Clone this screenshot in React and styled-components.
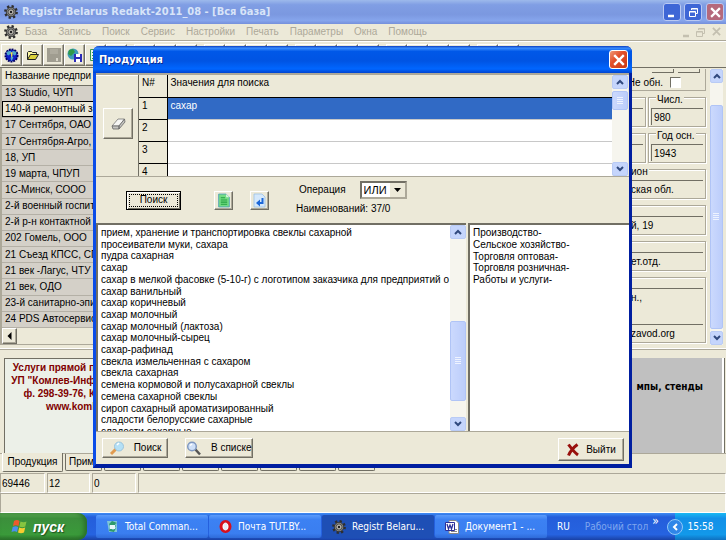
import React from 'react';
import styled, { createGlobalStyle, css } from 'styled-components';

const face = '#ece9d8';
const shadow = '#aca899';
const dark = '#716f64';
const uiFont = '"Liberation Sans", Arial, sans-serif';
const captionFont = '"DejaVu Sans Condensed", Tahoma, sans-serif';

const GlobalStyle = createGlobalStyle`
  * {
    box-sizing: border-box;
  }
  body {
    margin: 0;
    background: ${face};
    color: #000;
    font: 10px/12px ${uiFont};
  }
  button, input, select {
    font: inherit;
    color: inherit;
    margin: 0;
    padding: 0;
    border-radius: 0;
  }
`
const raised = css`
  background: ${face};
  border: 1px solid;
  border-color: #fff ${dark} ${dark} #fff;
  box-shadow: inset -1px -1px 0 ${shadow};
`
const sunken = css`
  border: 1px solid;
  border-color: ${shadow} #fff #fff ${shadow};
`
const Page = styled.div`
  position: relative;
  min-height: 100vh;
  display: flex;
  flex-direction: column;
  overflow: hidden;
`
const TitleBar = styled.header`
  display: flex;
  align-items: center;
  gap: 4px;
  height: 24px;
  padding: 0 2px 0 4px;
  background: linear-gradient(#9db9eb, #809ee4 20%, #7b98e0 60%, #86a5ec 85%, #7590dc);
  color: #d8e4f8;

  h1 {
    flex: 1;
    margin: 0;
    font: bold 11px/16px ${captionFont};
  }
`
const CaptionButton = styled.button`
  width: 18px;
  height: 18px;
  display: flex;
  align-items: center;
  justify-content: center;
  border: 1px solid #b9c9f3;
  border-radius: 3px;
  background: ${props => props.$close ? '#b5697c' : '#3e66d6'};
  margin-left: ${props => props.$close ? '0' : '-1px'};
`
const MenuBar = styled.nav`
  display: flex;
  align-items: center;
  gap: 11px;
  height: 17px;
  padding: 0 5px 0 4px;
  border-bottom: 1px solid ${shadow};
  color: ${shadow};

  svg:first-child {
    margin-right: -4px;
  }
`
const MenuItem = styled.button`
  border: 0;
  background: none;
`
const MdiButtons = styled.div`
  margin-left: auto;
  display: flex;
  gap: 6px;
`
const Toolbar = styled.div`
  display: flex;
  gap: 7px;
  height: 26px;
  padding: 2px 1px;
  border-top: 1px solid #fff;
`
const ToolGroup = styled.div`
  display: flex;
`
const ToolButton = styled.button`
  ${raised}
  width: 21px;
  height: 22px;
  display: flex;
  align-items: center;
  justify-content: center;
`
const Main = styled.main`
  flex: 1;
  display: flex;
  justify-content: space-between;
  border-top: 1px solid ${dark};
  border-bottom: 1px solid #fff;
  padding-bottom: 3px;
`
const Firms = styled.section`
  flex: 1;
  display: flex;
  flex-direction: column;
  border-left: 2px solid ${shadow};
`
const FirmTable = styled.table`
  flex: 1;
  width: 100%;
  height: 260px;
  border-collapse: collapse;
  background: #d4d0c8;

  th, td {
    padding: 0 3px;
    text-align: left;
    font-weight: normal;
    white-space: nowrap;
    border-bottom: 1px solid #b4b0a6;
  }
  th {
    height: 17px;
    background: ${face};
    border-bottom-color: ${dark};
  }
`
const FirmRow = styled.tr`
  ${props => props.$current && css`
    background: ${face};
    outline: 1px solid #000;
    outline-offset: -1px;
  `}
`
const HScroll = styled.div`
  display: flex;
  height: 17px;
  background: ${face};
  border-bottom: 1px solid ${shadow};
`
const HScrollButton = styled.button`
  ${raised}
  width: 15px;
  display: flex;
  align-items: center;
  justify-content: center;
`
const Card = styled.aside`
  width: 116px;
  display: flex;
  padding: 1px 3px 0 0;
`
const CardFields = styled.div`
  flex: 1;
  display: grid;
  grid-template-columns: 1fr 58px;
  grid-template-rows: 22px 30px 30px 30px 30px 30px 66px;
  gap: 6px 2px;
  margin-right: 4px;
`
const CardTop = styled.div`
  grid-column: 1 / -1;
  display: flex;
  flex-wrap: wrap;
  justify-content: flex-end;
  border: solid ${shadow};
  border-width: 0 1px 1px 0;
  padding: 0 5px;
`
const ClippedButton = styled.button`
  width: 22px;
  height: 4px;
  margin-left: 4px;
  border: solid ${dark};
  border-width: 0 1px 1px 0;
  background: ${face};
`
const CheckLabel = styled.label`
  flex-basis: 100%;
  display: flex;
  justify-content: flex-end;
  align-items: center;
  gap: 7px;
  padding-right: 19px;
`
const CheckBox = styled.input`
  appearance: none;
  width: 11px;
  height: 11px;
  background: #fff;
  border: 1px solid;
  border-color: ${dark} #fff #fff ${dark};
`
const Group = styled.label`
  position: relative;
  grid-column: ${props => props.$wide ? '1 / -1' : 'auto'};
  border: 1px solid ${shadow};
  box-shadow: inset 1px 1px 0 #fff, 1px 1px 0 #fff;
  padding: 10px 2px 1px 2px;
`
const Legend = styled.span`
  position: absolute;
  top: -4px;
  left: ${props => props.$tucked ? '19px' : '7px'};
  padding: 0 1px;
  line-height: 12px;
  background: ${face};
`
const Field = styled.input`
  display: block;
  width: 100%;
  height: 17px;
  padding-left: ${props => props.$tucked ? '17px' : '2px'};
  background: ${face};
  border: solid ${dark};
  border-width: 1px 0 0 1px;

  & + & {
    margin-top: 19px;
  }
`
const ScrollTrack = styled.div`
  display: flex;
  flex-direction: column;
  width: ${props => props.$width || 16}px;
  background: #f6f5ee;
`
const ScrollButton = styled.button`
  flex: none;
  height: 14px;
  display: flex;
  align-items: center;
  justify-content: center;
  border: 1px solid #b9cbf5;
  border-radius: 2px;
  background: #c5d5fc;
`
const ScrollThumb = styled.div`
  flex: ${props => props.$size};
  display: flex;
  align-items: center;
  justify-content: center;
  border: 1px solid #b0c4f6;
  border-radius: 2px;
  background: linear-gradient(90deg, #cbd9fd, #bccdfb);
`
const ScrollGap = styled.div`
  flex: ${props => props.$size};
`
const Banners = styled.section`
  display: flex;
  justify-content: space-between;
  height: 104px;
  padding: 8px 2px 0 4px;
  border-top: 1px solid ${shadow};
  font-weight: bold;
`
const MailBanner = styled.p`
  margin: 0;
  width: 92px;
  padding: 2px 1px;
  border: solid ${dark};
  border-width: 1px 0 0 1px;
  background: #ecf0e8;
  color: #800000;
  line-height: 13px;
  text-align: right;
  white-space: pre;
`
const StampBanner = styled.p`
  margin: 0;
  width: 110px;
  padding: 23px 19px;
  background: #c0c0c0;
  border-right: 2px solid #fff;
  box-shadow: 1px 0 0 ${dark};
  font-family: ${captionFont};
  text-align: right;
  white-space: nowrap;
`
const Tabs = styled.div`
  display: flex;
  align-items: flex-start;
  gap: 2px;
  height: 20px;
  padding-left: 2px;
  border-top: 1px solid ${shadow};
`
const Tab = styled.button`
  width: ${props => props.$active ? '61px' : '37px'};
  height: ${props => props.$active ? '19px' : '17px'};
  margin-top: ${props => props.$active ? '-1px' : '0'};
  border: solid;
  border-width: 0 1px 1px 1px;
  border-color: #fff ${dark} ${dark} ${props => props.$active ? '#fff' : dark};
  border-radius: 0 0 2px 2px;
  background: ${face};
  text-align: ${props => props.$active ? 'center' : 'left'};
  padding-left: ${props => props.$active ? '0' : '3px'};
`
const StatusBar = styled.footer`
  display: grid;
  grid-template-columns: 45px 43px 44px 1fr;
  gap: 2px;
  height: 20px;
`
const StatusCell = styled.div`
  ${sunken}
  padding: 4px 0 0 1px;
  grid-column: ${props => props.$wide ? '1 / -1' : 'auto'};
`
const Taskbar = styled.footer`
  display: flex;
  height: 27px;
  background: linear-gradient(#3f8cf3, #245edb 15%, #2663e0 80%, #1941a5);
  font-family: ${captionFont};
  color: #fff;
`
const StartButton = styled.button`
  width: 87px;
  display: flex;
  align-items: center;
  gap: 5px;
  padding-left: 11px;
  margin-right: 9px;
  border: 0;
  border-radius: 0 9px 9px 0;
  background: linear-gradient(#5eac56, #3c8f3c 20%, #3a9a3a 80%, #2a702a);
  box-shadow: inset -3px 0 4px #2a702a;
  font: italic bold 14px/20px "Liberation Sans", sans-serif;
  text-shadow: 1px 1px 1px #1f4f1f;
`
const TaskButton = styled.button`
  flex: 0 1 112px;
  display: flex;
  align-items: center;
  gap: 6px;
  padding-left: 10px;
  margin: 2px 1px 2px 0;
  border: 0;
  border-radius: 2px;
  background: ${props => props.$active ? '#1e4fb5' : 'linear-gradient(#5a9bfb, #3c81f3 20%, #3a7ef0 80%, #2f6bd8)'};
  white-space: nowrap;
`
const Lang = styled.span`
  margin: auto 15px auto 9px;
`
const DesktopBar = styled.span`
  margin: auto 4px auto 0;
  color: #7fa6ee;
`
const More = styled.span`
  margin-top: 2px;
  font-size: 12px;
`
const Tray = styled.div`
  position: relative;
  margin-left: auto;
  width: 51px;
  display: flex;
  align-items: center;
  justify-content: center;
  background: linear-gradient(#19b9f3, #1290e8 20%, #1299ea 80%, #0f70c0);
`
const TrayArrow = styled.button`
  position: absolute;
  left: -8px;
  width: 16px;
  height: 16px;
  display: flex;
  align-items: center;
  justify-content: center;
  border: 1px solid #8fc8f8;
  border-radius: 50%;
  background: #2f86e8;
`

const DialogLayer = styled.div`
  position: absolute;
  inset: 0;
  display: flex;
  justify-content: center;
  align-items: flex-start;
  padding: 46px 94px 0 93px;
`
const Dialog = styled.section`
  flex: 1;
  border: solid;
  border-width: 0 3px 4px;
  border-color: #0a3ee0 #001ea0 #001ea0 #0a4ce8;
  border-radius: 6px 6px 0 0;
  background: ${face};
`
const DialogTitle = styled.header`
  display: flex;
  align-items: center;
  justify-content: space-between;
  height: 27px;
  margin: 0 -3px;
  padding: 0 4px 0 6px;
  border-radius: 6px 6px 0 0;
  background: linear-gradient(#0a3ec0, #3a8cfd 8%, #0058e8 20%, #0054e3 55%, #0066ff 85%, #0043cf);
  color: #fff;

  h2 {
    margin: 0;
    font: bold 11px/16px ${captionFont};
    text-shadow: 1px 1px 0 #0a2a90;
  }
`
const DialogClose = styled.button`
  width: 19px;
  height: 19px;
  display: flex;
  align-items: center;
  justify-content: center;
  border: 1px solid #fff;
  border-radius: 3px;
  background: linear-gradient(135deg, #f09878, #e2502c 40%, #c83a14);
`
const Terms = styled.div`
  display: flex;
  height: 104px;
  padding: 0 1px 0 0;
  border-top: 2px solid ${shadow};
  border-bottom: 1px solid ${shadow};
`
const EraserPane = styled.div`
  width: 42px;
  padding: 32px 0 0 7px;
  border-top: 1px solid #fff;
`
const EraserButton = styled.button`
  ${raised}
  width: 30px;
  height: 31px;
  display: flex;
  align-items: center;
  justify-content: center;
`
const TermsView = styled.div`
  flex: 1;
  overflow: hidden;
  background: #fff;
  border-left: 1px solid ${dark};
`
const TermTable = styled.table`
  width: 100%;
  border-collapse: collapse;

  th, td {
    height: 22px;
    padding: 2px 3px;
    vertical-align: top;
    text-align: left;
    font-weight: normal;
    border-bottom: 1px solid #c8c8c8;
  }
  th {
    background: ${face};
    border-bottom: 1px solid #000;
  }
  th:first-child {
    width: 28px;
    border-right: 1px solid #000;
  }
`
const TermRow = styled.tr`
  td {
    background: ${props => props.$current ? '#316ac5' : '#fff'};
    color: ${props => props.$current ? '#fff' : '#000'};
  }
`
const Controls = styled.div`
  display: flex;
  align-items: center;
  height: 46px;
  padding-left: 30px;
`
const FindButton = styled.button`
  width: 55px;
  height: 19px;
  margin-right: 33px;
  border: 1px solid #000;
  background: ${face};
  box-shadow: inset 1px 1px 0 #fff, inset -1px -1px 0 ${dark};
  outline: 1px dotted #000;
  outline-offset: -4px;
`
const IconButton = styled.button`
  ${raised}
  width: 19px;
  height: 19px;
  display: flex;
  align-items: center;
  justify-content: center;
  margin-right: 17px;
`
const Operation = styled.div`
  margin: -4px 0 0 10px;
`
const OperationRow = styled.div`
  display: flex;
  align-items: center;
  gap: 14px;
  padding-left: 3px;
  margin-bottom: 4px;
`
const SelectBox = styled.div`
  position: relative;
  width: 47px;
  height: 18px;
  border: 2px solid;
  border-color: ${dark} ${shadow} ${shadow} ${dark};
  background: #fff;
`
const Select = styled.select`
  appearance: none;
  display: block;
  width: 100%;
  height: 100%;
  padding-left: 2px;
  border: 0;
  background: none;
  font-size: 11px;
`
const SelectArrow = styled.span`
  position: absolute;
  top: 0;
  right: 0;
  bottom: 0;
  width: 15px;
  display: flex;
  align-items: center;
  justify-content: center;
  background: ${face};
  pointer-events: none;
`
const Lists = styled.div`
  display: grid;
  grid-template-columns: 370px 1fr;
  gap: 2px;
  height: 209px;
  border-bottom: 1px solid ${shadow};
`
const ListBox = styled.div`
  display: flex;
  overflow: hidden;
  background: #fff;
  border: solid ${dark};
  border-width: 2px 0 0 2px;
`
const Names = styled.ul`
  flex: 1;
  display: flex;
  flex-direction: column;
  justify-content: space-between;
  height: ${props => props.$short ? '60px' : '212px'};
  margin: 0;
  padding: 2px 0 0 3px;
  list-style: none;
  line-height: 11px;
  white-space: nowrap;
  overflow: hidden;
`
const Actions = styled.footer`
  display: flex;
  align-items: flex-start;
  gap: 17px;
  height: 32px;
  padding: 6px 5px 0 6px;
`
const ActionButton = styled.button`
  ${raised}
  min-width: 66px;
  height: ${props => props.$last ? '23px' : '20px'};
  display: flex;
  align-items: center;
  justify-content: center;
  gap: ${props => props.$last ? '6px' : '8px'};
  margin-left: ${props => props.$last ? 'auto' : '0'};
`

const Gear = ({ size = 14 }) => (
  <svg width={size} height={size} viewBox="0 0 16 16">
    <circle cx="8" cy="8" r="6.4" fill="none" stroke="#2e2e2e" strokeWidth="3" strokeDasharray="2.5 2.5" />
    <circle cx="8" cy="8" r="5.4" fill="#85857f" stroke="#2e2e2e" />
    <circle cx="8" cy="8" r="3.4" fill="#d8d4c8" stroke="#444" />
    <path d="M8 3v10M3 8h10M4.5 4.5l7 7M11.5 4.5l-7 7" stroke="#777" strokeWidth=".6" />
    <circle cx="8" cy="8" r="1.4" fill="#222" />
  </svg>
)
const Cross = ({ size = 11, color = '#fff' }) => (
  <svg width={size} height={size} viewBox="0 0 10 10">
    <path d="M1 1l8 8M9 1l-8 8" stroke={color} strokeWidth="2" />
  </svg>
)
const Minimize = ({ color = '#fff' }) => (
  <svg width="11" height="11" viewBox="0 0 11 11"><path d="M1 9h6" stroke={color} strokeWidth="2.5" /></svg>
)
const Restore = ({ color = '#fff' }) => (
  <svg width="11" height="11" viewBox="0 0 11 11" fill="none" stroke={color}>
    <path d="M3.5 3V1.5h6v5H8M3.5 2h6" />
    <path d="M1.5 4.5h6v5h-6zM1.5 5h6" />
  </svg>
)
const Chevron = ({ down }) => (
  <svg width="8" height="6" viewBox="0 0 8 6">
    <path d={down ? 'M1 1l3 3 3-3' : 'M1 5l3-3 3 3'} fill="none" stroke="#30497e" strokeWidth="2" />
  </svg>
)
const Grip = () => (
  <svg width="7" height="8" viewBox="0 0 7 8"><path d="M0 .5h6M0 2.5h6M0 4.5h6M0 6.5h6" stroke="#eef3ff" /></svg>
)
const Globe = () => (
  <svg width="15" height="15" viewBox="0 0 16 16">
    <circle cx="8" cy="8" r="6.5" fill="#1020c8" stroke="#000060" strokeDasharray="2 1" strokeWidth="2" />
    <path d="M3 4l4-1 1 2-3 3-2-1zM9 3l4 1v3l-2 1-2-2zM8 8l2 2-2 4-1-3z" fill="#4fa8c8" />
    <path d="M7 5l2-1v4l-1 2z" fill="#f4e04a" />
  </svg>
)
const Folder = () => (
  <svg width="14" height="12" viewBox="0 0 14 12">
    <path d="M1.5 10.5v-7l1-1h3l1 1h4v2" fill="#fbf6a0" stroke="#222" />
    <path d="M1.5 10.5l3-5h8l-3 5z" fill="#dcd23c" stroke="#222" />
  </svg>
)
const Disk = () => (
  <svg width="14" height="14" viewBox="0 0 14 14">
    <path d="M0 0h14v14H0z" fill="#a09d90" />
    <path d="M3 1h8v5H3z" fill="#aeab9e" />
    <path d="M9 10h2v3H9z" fill="#d8d5c8" />
  </svg>
)
const GlobeDisk = () => (
  <svg width="16" height="15" viewBox="0 0 16 15">
    <circle cx="6" cy="6" r="5.5" fill="#3c9bb8" />
    <path d="M2 2l4-1 2 3-4 4-3-2zM7 7l3 1-2 4z" fill="#2f9a4a" />
    <path d="M7 6h8v8H7z" fill="#2a2ab8" />
    <path d="M9 6h4v3H9zM9 11h4v3H9z" fill="#fff" />
  </svg>
)
const GreenList = () => (
  <svg width="14" height="14" viewBox="0 0 14 14">
    <path d="M1.5 1.5h11v11h-11z" fill="#e8f6ea" stroke="#3a9a50" />
    <path d="M3 4.5h3M3 7.5h3M3 10.5h3" stroke="#2fa04a" />
  </svg>
)
const Sheet = () => (
  <svg width="14" height="15" viewBox="0 0 12 14">
    <path d="M1 1h7l3 3v9H1z" fill="#74dc84" stroke="#4fa0b8" strokeWidth=".8" />
    <path d="M8 1v3h3" fill="#d8f6dc" />
    <path d="M3 4.5h4M3 6.5h6M3 8.5h6M3 10.5h6" stroke="#22a040" />
  </svg>
)
const ReturnSheet = () => (
  <svg width="13" height="15" viewBox="0 0 13 15">
    <path d="M1 1h8l3 3v10H1z" fill="#d4e8fc" stroke="#9cc0e4" strokeWidth=".8" />
    <path d="M9.5 5v5H6" fill="none" stroke="#1c68d8" strokeWidth="2" />
    <path d="M7 6.5v7L3 10z" fill="#1c68d8" />
  </svg>
)
const Eraser = () => (
  <svg width="15" height="12" viewBox="0 0 15 12">
    <path d="M1 8l6-7h6.5l-5.5 7z" fill="#f6f6f4" stroke="#777" strokeWidth=".8" />
    <path d="M1 8h7v3H2zM8 8l5.5-7 .5 3-6 7z" fill="#c4c4c0" stroke="#666" strokeWidth=".8" />
  </svg>
)
const Loupe = ({ warm }) => (
  <svg width="17" height="15" viewBox="0 0 17 15">
    {warm
      ? <g><path d="M7 8l-5 5" stroke="#e09a50" strokeWidth="3" /><circle cx="10" cy="5.5" r="4.5" fill="#b4e0f6" stroke="#9cc4dc" /><path d="M8 4l2-2" stroke="#fff" strokeWidth="1.5" /></g>
      : <g><path d="M9 8l5 5.5" stroke="#555" strokeWidth="2.5" /><circle cx="6" cy="5.5" r="4.3" fill="#cfe0f8" stroke="#7f98c0" strokeWidth="1.5" /><path d="M4 4.5l2-1.5" stroke="#fff" strokeWidth="1.5" /></g>}
  </svg>
)
const RedCross = () => (
  <svg width="14" height="14" viewBox="0 0 14 14">
    <path d="M2.5 1.5C5 5 8 9 12 12M11.5 1.5C8 4 4 9 2.5 12.5" fill="none" stroke="#98100c" strokeWidth="3" />
  </svg>
)
const Flag = () => (
  <svg width="17" height="16" viewBox="0 0 17 16">
    <path d="M3 2q3-2 5.5 0L7.5 7Q5 5.5 2 7z" fill="#ee5a2c" />
    <path d="M9.5 2.5q3 1.5 6 0l-1.2 5q-3 1.5-6 0z" fill="#86c440" />
    <path d="M1.7 8q3-1.5 5.5 0L6 13Q3.5 11.5.5 13z" fill="#4a90ee" />
    <path d="M8.2 8.5q3 1.5 6 0L13 13.5q-3 1.5-6 0z" fill="#f8cc30" />
  </svg>
)
const Commander = () => (
  <svg width="13" height="13" viewBox="0 0 13 13">
    <path d="M1 1h10v11H3z" fill="#7fc4d8" />
    <path d="M3 4l3-3 5 2-2 1 1 3-3-2-3 1zM10 8l-2 4-5-1 1-3 3 2z" fill="#2d9a6c" />
    <path d="M4 5h5v4H4z" fill="#e6f6fa" />
  </svg>
)
const Opera = () => (
  <svg width="13" height="13" viewBox="0 0 13 13">
    <ellipse cx="6.5" cy="6.5" rx="4.5" ry="5" fill="#fff" stroke="#d8101c" strokeWidth="3" />
    <ellipse cx="6.5" cy="6.5" rx="2" ry="4" fill="#e8ecf8" />
  </svg>
)
const Word = () => (
  <svg width="14" height="14" viewBox="0 0 14 14">
    <path d="M4 .5h7l2.5 2.5v10.5H4z" fill="#fff" stroke="#888" />
    <path d="M6 9.5h6M6 11.5h6" stroke="#888" />
    <path d="M.5 2.5h9v8h-9z" fill="#fff" stroke="#2a2f9a" />
    <path d="M2 4l1.5 5L5 5l1.5 4L8 4" fill="none" stroke="#2a2f9a" strokeWidth="1.3" />
  </svg>
)

const menu = ['База', 'Запись', 'Поиск', 'Сервис', 'Настройки', 'Печать', 'Параметры', 'Окна', 'Помощь']
const toolIcons = [Globe, Folder, Disk, GlobeDisk, GreenList]
const toolGroups = [6, 3, 4, 4, 4, 2]
const firms = [
  '13 Studio, ЧУП', '140-й ремонтный за', '17 Сентября, ОАО', '17 Сентября-Агро, Ч', '18, УП',
  '19 марта, ЧПУП', '1С-Минск, СООО', '2-й военный госпит', '2-й р-н контактной с', '202 Гомель, ООО',
  '21 Съезд КПСС, СП', '21 век -Лагус, ЧТУ', '21 век, ОДО', '23-й санитарно-эпи', '24 PDS Автосервис'
]
const products = [
  'прием, хранение и транспортировка свеклы сахарной', 'просеиватели муки, сахара', 'пудра сахарная', 'сахар',
  'сахар в мелкой фасовке (5-10-г) с логотипом заказчика для предприятий о', 'сахар ванильный',
  'сахар коричневый', 'сахар молочный', 'сахар молочный (лактоза)', 'сахар молочный-сырец', 'сахар-рафинад',
  'свекла измельченная с сахаром', 'свекла сахарная', 'семена кормовой и полусахарной свеклы',
  'семена сахарной свеклы', 'сироп сахарный ароматизированный', 'сладости белорусские сахарные', 'сладости сахарные'
]
const branches = ['Производство-', 'Сельское хозяйство-', 'Торговля оптовая-', 'Торговля розничная-', 'Работы и услуги-']
const tasks = [
  { name: 'Total Comman...', Icon: Commander },
  { name: 'Почта TUT.BY...', Icon: Opera },
  { name: 'Registr Belaru...', Icon: Gear, active: true },
  { name: 'Документ1 - ...', Icon: Word }
]

const ScrollBar = ({ width, before, thumb, after }) => (
  <ScrollTrack $width={width}>
    <ScrollButton aria-label="Вверх"><Chevron /></ScrollButton>
    <ScrollGap $size={before} />
    <ScrollThumb $size={thumb}><Grip /></ScrollThumb>
    <ScrollGap $size={after} />
    <ScrollButton aria-label="Вниз"><Chevron down /></ScrollButton>
  </ScrollTrack>
)

const FirmList = () => (
  <Firms>
    <FirmTable>
      <thead><tr><th>Название предпри</th></tr></thead>
      <tbody>
        {firms.map((name, i) => (
          <FirmRow key={name} $current={i === 1}><td>{name}</td></FirmRow>
        ))}
      </tbody>
    </FirmTable>
    <HScroll>
      <HScrollButton aria-label="Влево">
        <svg width="5" height="8" viewBox="0 0 5 8"><path d="M4.5 0v8L.5 4z" /></svg>
      </HScrollButton>
    </HScroll>
  </Firms>
)

const FirmCard = () => (
  <Card>
    <CardFields>
      <CardTop>
        <ClippedButton /><ClippedButton />
        <CheckLabel>Не обн. <CheckBox type="checkbox" /></CheckLabel>
      </CardTop>
      <Group><Field aria-label="Код" /></Group>
      <Group><Legend>Числ.</Legend><Field defaultValue="980" /></Group>
      <Group><Field aria-label="Индекс" /></Group>
      <Group><Legend>Год осн.</Legend><Field defaultValue="1943" /></Group>
      <Group $wide><Legend $tucked>ион</Legend><Field $tucked defaultValue="ская обл." /></Group>
      <Group $wide><Field $tucked aria-label="Адрес" defaultValue="й, 19" /></Group>
      <Group $wide><Field $tucked aria-label="Отдел" defaultValue="ет.отд." /></Group>
      <Group $wide as="div">
        <Field $tucked aria-label="Телефон" defaultValue="н.," />
        <Field $tucked aria-label="Сайт" defaultValue="zavod.org" />
      </Group>
    </CardFields>
    <ScrollBar width={13} before={22} thumb={222} after={2} />
  </Card>
)

const ProductDialog = () => (
  <DialogLayer>
    <Dialog role="dialog" aria-labelledby="dialog-title">
      <DialogTitle>
        <h2 id="dialog-title">Продукция</h2>
        <DialogClose aria-label="Закрыть"><Cross size={12} /></DialogClose>
      </DialogTitle>
      <Terms>
        <EraserPane>
          <EraserButton aria-label="Очистить"><Eraser /></EraserButton>
        </EraserPane>
        <TermsView>
          <TermTable>
            <thead><tr><th>N#</th><th>Значения для поиска</th></tr></thead>
            <tbody>
              {['сахар', '', '', ''].map((term, i) => (
                <TermRow key={i} $current={i === 0}>
                  <th>{i + 1}</th>
                  <td>{term}</td>
                </TermRow>
              ))}
            </tbody>
          </TermTable>
        </TermsView>
        <ScrollBar before={2} thumb={14} after={44} />
      </Terms>
      <Controls>
        <FindButton>Поиск</FindButton>
        <IconButton aria-label="Список"><Sheet /></IconButton>
        <IconButton aria-label="Вернуть"><ReturnSheet /></IconButton>
        <Operation>
          <OperationRow>
            <label htmlFor="operation">Операция</label>
            <SelectBox>
              <Select id="operation"><option>ИЛИ</option></Select>
              <SelectArrow>
                <svg width="7" height="4" viewBox="0 0 7 4"><path d="M0 0h7L3.5 4z" /></svg>
              </SelectArrow>
            </SelectBox>
          </OperationRow>
          Наименований: 37/0
        </Operation>
      </Controls>
      <Lists>
        <ListBox>
          <Names>{products.map(name => <li key={name}>{name}</li>)}</Names>
          <ScrollBar before={82} thumb={79} after={16} />
        </ListBox>
        <ListBox>
          <Names $short>{branches.map(name => <li key={name}>{name}</li>)}</Names>
        </ListBox>
      </Lists>
      <Actions>
        <ActionButton><Loupe warm />Поиск</ActionButton>
        <ActionButton><Loupe />В списке</ActionButton>
        <ActionButton $last><RedCross />Выйти</ActionButton>
      </Actions>
    </Dialog>
  </DialogLayer>
)

const App = () => (
  <Page>
    <GlobalStyle />
    <TitleBar>
      <Gear />
      <h1>Registr Belarus Redakt-2011_08 - [Вся база]</h1>
      <CaptionButton aria-label="Свернуть"><Minimize /></CaptionButton>
      <CaptionButton aria-label="Восстановить"><Restore /></CaptionButton>
      <CaptionButton $close aria-label="Закрыть"><Cross /></CaptionButton>
    </TitleBar>
    <MenuBar>
      <Gear />
      {menu.map(item => <MenuItem key={item}>{item}</MenuItem>)}
      <MdiButtons>
        <Minimize color="#c4c0b0" />
        <Restore color="#c4c0b0" />
        <Cross size={9} color="#c4c0b0" />
      </MdiButtons>
    </MenuBar>
    <Toolbar>
      {toolGroups.map((count, group) => (
        <ToolGroup key={group}>
          {Array.from({ length: count }, (_, i) => {
            const Icon = group === 0 && toolIcons[i];
            return <ToolButton key={i}>{Icon && <Icon />}</ToolButton>
          })}
        </ToolGroup>
      ))}
    </Toolbar>
    <Main>
      <FirmList />
      <FirmCard />
    </Main>
    <Banners>
      <MailBanner>{'Услуги прямой п\nУП "Комлев-Инф\nф. 298-39-76, К\nwww.koml'}</MailBanner>
      <StampBanner>мпы, стенды</StampBanner>
    </Banners>
    <Tabs>
      <Tab $active>Продукция</Tab>
      <Tab>Прим</Tab>
      {Array.from({ length: 7 }, (_, i) => <Tab key={i} />)}
    </Tabs>
    <StatusBar>
      <StatusCell>69446</StatusCell>
      <StatusCell>12</StatusCell>
      <StatusCell>0</StatusCell>
      <StatusCell />
    </StatusBar>
    <StatusBar>
      <StatusCell $wide />
    </StatusBar>
    <Taskbar>
      <StartButton><Flag />пуск</StartButton>
      {tasks.map(({ name, Icon, active }) => (
        <TaskButton key={name} $active={active}><Icon />{name}</TaskButton>
      ))}
      <Lang>RU</Lang>
      <DesktopBar>Рабочий стол</DesktopBar>
      <More>»</More>
      <Tray>
        <TrayArrow aria-label="Показать значки">
          <svg width="7" height="8" viewBox="0 0 7 8"><path d="M5 1L2 4l3 3" fill="none" stroke="#fff" strokeWidth="2" /></svg>
        </TrayArrow>
        15:58
      </Tray>
    </Taskbar>
    <ProductDialog />
  </Page>
)

export default App;
